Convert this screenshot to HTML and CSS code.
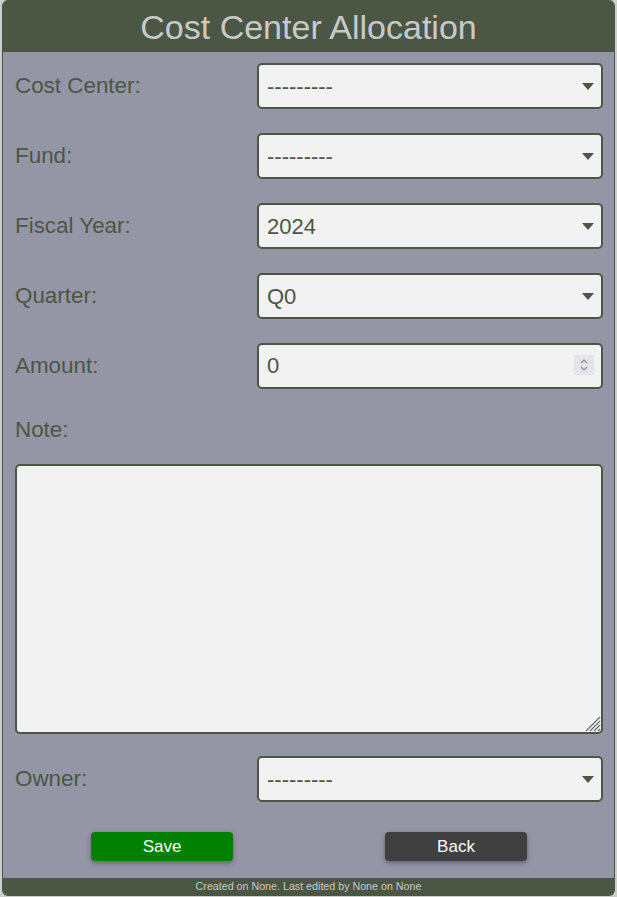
FILE: index.html
```html
<!DOCTYPE html>
<html lang="en">
<head>
<meta charset="utf-8">
<title>Cost Center Allocation</title>
<link rel="stylesheet" href="styles.css">
</head>
<body>
<div class="card">
  <div class="header"><h1 class="title">Cost Center Allocation</h1></div>
  <form class="form">
    <div class="row">
      <label class="label">Cost Center:</label>
      <div class="select-wrap"><select class="field"><option>---------</option></select></div>
    </div>
    <div class="row">
      <label class="label">Fund:</label>
      <div class="select-wrap"><select class="field"><option>---------</option></select></div>
    </div>
    <div class="row">
      <label class="label">Fiscal Year:</label>
      <div class="select-wrap"><select class="field"><option>2024</option></select></div>
    </div>
    <div class="row">
      <label class="label">Quarter:</label>
      <div class="select-wrap"><select class="field"><option>Q0</option></select></div>
    </div>
    <div class="row">
      <label class="label">Amount:</label>
      <div class="number-wrap">
        <input class="field" type="number" value="0">
        <span class="spin">
          <svg width="10" height="14" viewBox="0 0 10 14"><path d="M2 5 L5 2 L8 5 M2 9 L5 12 L8 9" fill="none" stroke="#8c8c94" stroke-width="1.2"/></svg>
        </span>
      </div>
    </div>
    <div class="note-label"><label class="label">Note:</label></div>
    <div class="textarea-wrap">
      <textarea class="textarea"></textarea>
      <span class="grip">
        <svg width="17" height="17" viewBox="0 0 17 17"><path d="M16 2 L2 16 M16 6 L6 16 M16 10 L10 16 M16 14 L14 16" fill="none" stroke="#666" stroke-width="1.1"/></svg>
      </span>
    </div>
    <div class="row owner-row">
      <label class="label">Owner:</label>
      <div class="select-wrap"><select class="field"><option>---------</option></select></div>
    </div>
    <div class="buttons">
      <button type="button" class="btn btn-save">Save</button>
      <button type="button" class="btn btn-back">Back</button>
    </div>
  </form>
  <div class="footer">Created on None. Last edited by None on None</div>
</div>
</body>
</html>
```
FILE: styles.css
```css
* { box-sizing: border-box; }
html, body { margin: 0; padding: 0; }
body {
  background: #cdcdcd;
  font-family: "Liberation Sans", Arial, sans-serif;
  width: 617px;
  height: 897px;
  overflow: hidden;
}
.card {
  margin: 0 2px;
  height: 896px;
  border: 1px solid #4b5645;
  border-top: none;
  border-radius: 6px;
  overflow: hidden;
  background: #9496a5;
  display: flex;
  flex-direction: column;
}
.header {
  background: #4b5645;
  height: 52px;
  display: flex;
  align-items: center;
  justify-content: center;
}
.title {
  margin: 0;
  font-weight: normal;
  font-size: 34px;
  color: #c9c9c9;
  line-height: 1;
  padding-top: 2px;
}
.form {
  flex: 1;
  display: flex;
  flex-direction: column;
  padding: 11px 11px 0 12px;
}
.row {
  display: grid;
  grid-template-columns: 242px 1fr;
  align-items: center;
  height: 46px;
  margin-bottom: 24px;
}
.label {
  font-size: 22.4px;
  color: #4b5645;
}
.field {
  width: 100%;
  height: 46px;
  border: 2px solid #4b5645;
  border-radius: 5px;
  background: #f2f2f2;
  font-family: "Liberation Sans", Arial, sans-serif;
  font-size: 22px;
  color: #4b5645;
  padding: 0 0 0 8px;
  margin: 0;
  -webkit-appearance: none;
  appearance: none;
  outline: none;
}
.select-wrap, .number-wrap {
  position: relative;
  height: 46px;
}
.select-wrap::after {
  content: "";
  position: absolute;
  right: 9px;
  top: 20px;
  border-left: 6.5px solid transparent;
  border-right: 6.5px solid transparent;
  border-top: 7px solid #4b5645;
  pointer-events: none;
}
.number-wrap input::-webkit-inner-spin-button,
.number-wrap input::-webkit-outer-spin-button {
  -webkit-appearance: none;
  margin: 0;
}
.spin {
  position: absolute;
  right: 9px;
  top: 12px;
  width: 20px;
  height: 20px;
  background: #e4e4ea;
  display: flex;
  align-items: center;
  justify-content: center;
}
.note-label {
  height: 34px;
  display: flex;
  align-items: center;
}
.textarea-wrap {
  position: relative;
  margin-top: 17px;
  height: 270px;
}
.textarea {
  display: block;
  height: 270px;
  width: 100%;
  border: 2px solid #4b5645;
  border-radius: 5px;
  background: #f2f2f2;
  font-family: "Liberation Sans", Arial, sans-serif;
  font-size: 16px;
  outline: none;
  resize: none;
}
.grip {
  position: absolute;
  right: 2px;
  bottom: 2px;
  width: 17px;
  height: 17px;
  display: flex;
}
.owner-row {
  margin-top: 22px;
  margin-bottom: 30px;
}
.buttons {
  display: grid;
  grid-template-columns: 1fr 1fr;
  justify-items: center;
}
.btn {
  width: 142px;
  height: 29px;
  border: none;
  border-radius: 4px;
  color: #ffffff;
  font-family: "Liberation Sans", Arial, sans-serif;
  font-size: 17px;
  box-shadow: 0 2px 5px rgba(0, 0, 0, 0.35);
  padding: 0;
}
.btn-save { background: #008000; }
.btn-back { background: #404040; }
.footer {
  height: 17px;
  background: #4b5645;
  color: #c9c9c9;
  font-size: 10.7px;
  text-align: center;
  line-height: 17px;
}
```
